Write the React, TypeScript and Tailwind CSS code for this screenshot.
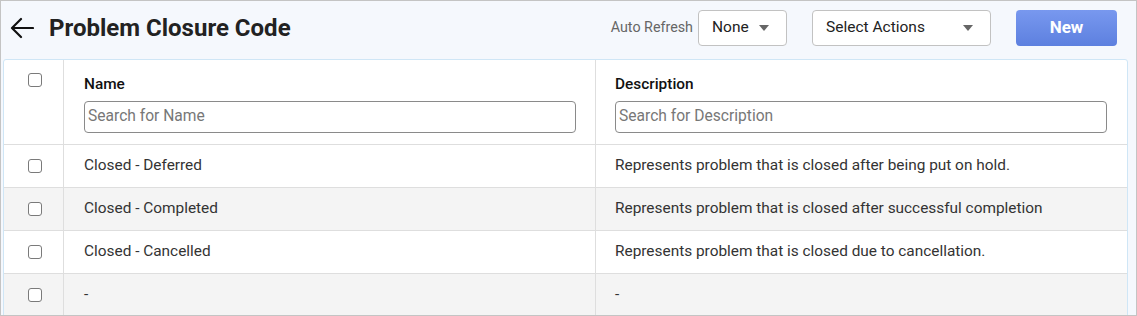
import React from 'react';

const rows = [
  { name: 'Closed - Deferred', description: 'Represents problem that is closed after being put on hold.' },
  { name: 'Closed - Completed', description: 'Represents problem that is closed after successful completion' },
  { name: 'Closed - Cancelled', description: 'Represents problem that is closed due to cancellation.' },
  { name: '-', description: '-' },
];

function Checkbox() {
  return <span className="block w-[14px] h-[14px] rounded-[3px] border-[1.5px] border-[#7a7a7a] bg-white" />;
}

function Caret() {
  return (
    <svg width="10" height="6" viewBox="0 0 10 6">
      <path d="M0 0 L10 0 L5 6 Z" fill="#666" />
    </svg>
  );
}

export default function App() {
  return (
    <div
      className="w-[1137px] h-[316px] overflow-hidden border border-[#c4c4c4] bg-[#f5f8fd] text-[#222]"
      style={{ fontFamily: 'Roboto, "Liberation Sans", sans-serif' }}
    >
      {/* Page header */}
      <div className="h-[58px] flex items-start pt-[9px] pl-[9px] pr-[19px]">
        <div className="h-[36px] flex items-center">
          <svg width="24" height="22" viewBox="0 0 24 22" className="shrink-0">
            <path d="M23 11 H3 M11 2 L2 11 L11 20" stroke="#111" strokeWidth="2.2" fill="none" strokeLinecap="round" strokeLinejoin="round" />
          </svg>
          <h1 className="ml-[15px] text-[24px] font-bold text-[#222] leading-none">Problem Closure Code</h1>
        </div>
        <div className="ml-auto flex items-center">
          <span className="text-[14.3px] text-[#666] mr-[5px]">Auto Refresh</span>
          <div className="w-[89px] h-[36px] rounded-[4px] border border-[#c2c2c2] bg-white flex items-center pl-[13px] pr-[17px] justify-between text-[15.5px] text-[#222]">
            None
            <Caret />
          </div>
          <div className="ml-[25px] w-[179px] h-[36px] rounded-[4px] border border-[#c2c2c2] bg-white flex items-center pl-[13px] pr-[17px] justify-between text-[15.5px] text-[#222]">
            Select Actions
            <Caret />
          </div>
          <button className="ml-[25px] w-[101px] h-[36px] rounded-[4px] bg-gradient-to-b from-[#7898ef] to-[#5d80df] text-white text-[17px] font-bold">
            New
          </button>
        </div>
      </div>

      {/* Table card */}
      <div className="ml-[2px] mr-[8px] border border-[#cfe6f6] rounded-t-[3px] bg-white">
        <div className="grid grid-cols-[60px_532px_1fr] border-b border-[#dedede] h-[85px]">
          <div className="border-r border-[#dedede] flex justify-center pl-[3px] pt-[13px]">
            <Checkbox />
          </div>
          <div className="border-r border-[#dedede] pl-[20px] pr-[19px] pt-[14px]">
            <div className="text-[15.4px] font-medium text-[#111] leading-[20px]">Name</div>
            <div className="mt-[7px] h-[32px] rounded-[4px] border border-[#8a8a8a] flex items-center px-[3px] text-[15.6px] text-[#777]">
              Search for Name
            </div>
          </div>
          <div className="pl-[19px] pr-[20px] pt-[14px]">
            <div className="text-[15.4px] font-medium text-[#111] leading-[20px]">Description</div>
            <div className="mt-[7px] h-[32px] rounded-[4px] border border-[#8a8a8a] flex items-center px-[3px] text-[15.6px] text-[#777]">
              Search for Description
            </div>
          </div>
        </div>
        {rows.map((row, idx) => (
          <div
            key={idx}
            className={`grid grid-cols-[60px_532px_1fr] h-[43px] border-b border-[#dedede] text-[15.4px] text-[#333] ${idx % 2 === 1 ? 'bg-[#f4f4f4]' : 'bg-white'}`}
          >
            <div className="border-r border-[#dedede] flex items-center justify-center pl-[3px]">
              <Checkbox />
            </div>
            <div className="border-r border-[#dedede] flex items-center pl-[20px]">{row.name}</div>
            <div className="flex items-center pl-[19px]">{row.description}</div>
          </div>
        ))}
      </div>
    </div>
  );
}
